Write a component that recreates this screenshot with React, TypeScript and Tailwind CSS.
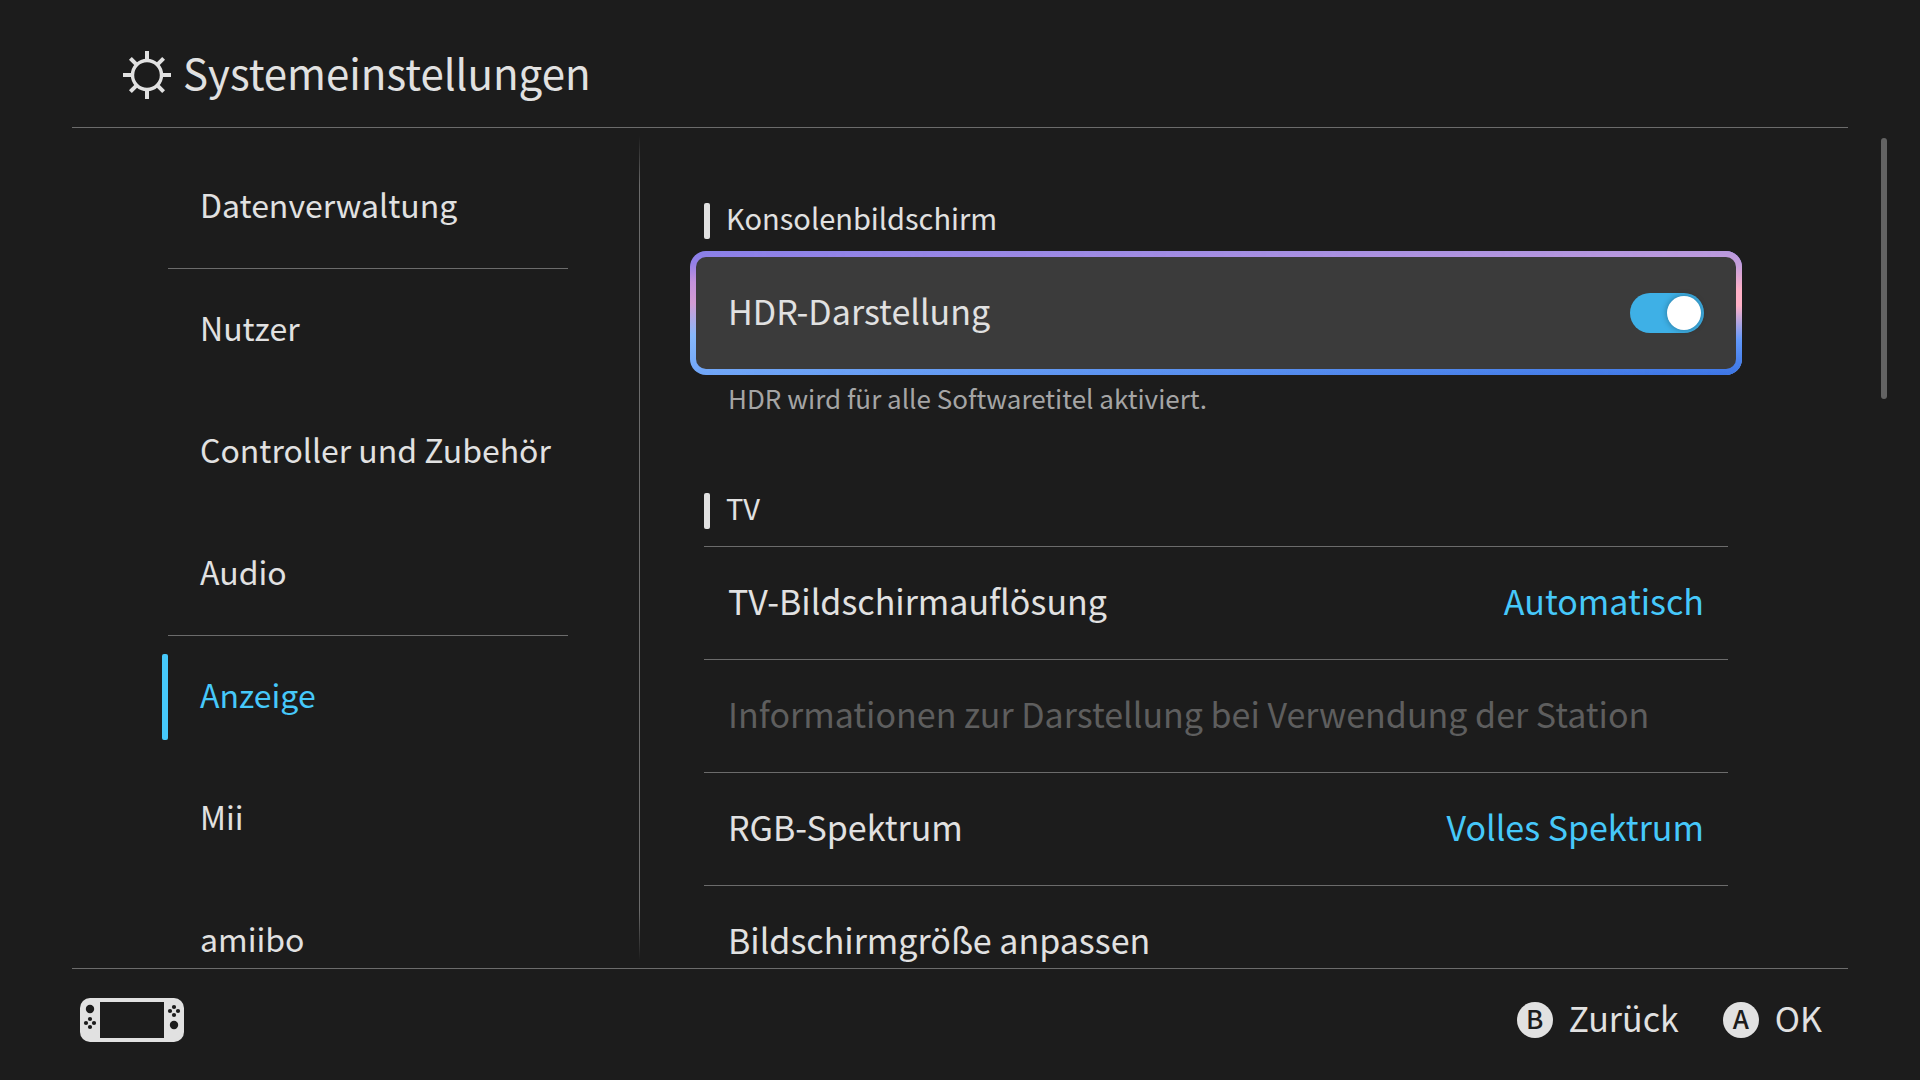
import { useState } from "react";

type NavItem = { label: string; active?: boolean; lineAfter?: boolean };

const navItems: NavItem[] = [
  { label: "Datenverwaltung", lineAfter: true },
  { label: "Nutzer" },
  { label: "Controller und Zubehör" },
  { label: "Audio", lineAfter: true },
  { label: "Anzeige", active: true },
  { label: "Mii" },
  { label: "amiibo" },
];

type Row = { label: string; value?: string; disabled?: boolean };

const tvRows: Row[] = [
  { label: "TV-Bildschirmauflösung", value: "Automatisch" },
  { label: "Informationen zur Darstellung bei Verwendung der Station", disabled: true },
  { label: "RGB-Spektrum", value: "Volles Spektrum" },
  { label: "Bildschirmgröße anpassen" },
];

const rayAngles = [0, 45, 90, 135, 180, 225, 270, 315];

function SettingsIcon() {
  return (
    <svg viewBox="-24 -24 48 48" className="size-12 shrink-0" fill="none" stroke="currentColor" aria-hidden="true">
      <circle r="14.5" strokeWidth="3.4" />
      {rayAngles.map((angle) => (
        <path
          key={angle}
          d={angle % 90 === 0 ? "M0 -15V-24" : "M0 -15V-23.5"}
          strokeWidth="4"
          transform={`rotate(${angle})`}
        />
      ))}
    </svg>
  );
}

function ConsoleIcon() {
  return (
    <svg viewBox="0 0 104 44" className="h-11 w-[104px] shrink-0" aria-label="Konsole" role="img">
      <rect width="104" height="44" rx="10" fill="#e1e1e1" />
      <g fill="#1c1c1c">
        <rect x="20" y="4" width="64" height="36" />
        <circle cx="10" cy="11" r="4.2" />
        <circle cx="10" cy="21" r="2.1" />
        <circle cx="6" cy="25" r="2.1" />
        <circle cx="14" cy="25" r="2.1" />
        <circle cx="10" cy="29" r="2.1" />
        <circle cx="94" cy="9" r="2.1" />
        <circle cx="90" cy="13" r="2.1" />
        <circle cx="98" cy="13" r="2.1" />
        <circle cx="94" cy="17" r="2.1" />
        <circle cx="94" cy="27" r="4.2" />
      </g>
    </svg>
  );
}

function SectionTitle({ children }: { children: string }) {
  return (
    <h2 className="flex h-9 items-center gap-4 text-[29px] leading-none">
      <span className="h-full w-1.5 rounded-xs bg-[#e1e1e1]" />
      <span className="pb-2">{children}</span>
    </h2>
  );
}

function HintButton({ glyph, label }: { glyph: string; label: string }) {
  return (
    <button type="button" className="flex items-center gap-4 text-[34px]">
      <span className="grid size-9 place-items-center rounded-full bg-[#e1e1e1] pb-1 text-[26px] leading-none font-medium text-[#1c1c1c]">
        {glyph}
      </span>
      <span className="pb-1 leading-10">{label}</span>
    </button>
  );
}

export default function App() {
  const [hdr, setHdr] = useState(true);

  return (
    <div className="flex h-screen flex-col overflow-hidden bg-[#1c1c1c] font-['Noto_Sans_CJK_JP',sans-serif] text-[#e1e1e1]">
      <header className="mx-[72px] flex h-32 shrink-0 items-center gap-3 border-b border-[#6b6b6b] pt-[22px] pl-[51px]">
        <SettingsIcon />
        <h1 className="pb-1.5 text-[42px] leading-none">Systemeinstellungen</h1>
      </header>

      <main className="flex min-h-0 flex-1">
        <nav className="w-[568px] shrink-0 overflow-hidden pt-[18px] pl-[162px]">
          <ul>
            {navItems.map((item) => (
              <li key={item.label}>
                <button
                  type="button"
                  aria-current={item.active ? "page" : undefined}
                  className={
                    item.active
                      ? "flex h-[122px] w-full items-center gap-8 text-left text-[32px] text-[#46c8fa]"
                      : "flex h-[122px] w-full items-center gap-8 text-left text-[32px]"
                  }
                >
                  <span
                    className={
                      item.active ? "h-[86px] w-1.5 rounded-xs bg-[#46c8fa]" : "h-[86px] w-1.5"
                    }
                  />
                  <span className="pb-1.5 leading-10">{item.label}</span>
                </button>
                {item.lineAfter && <hr className="ml-1.5 border-[#6b6b6b]" />}
              </li>
            ))}
          </ul>
        </nav>

        <div className="my-2 ml-[71px] w-px shrink-0 bg-[linear-gradient(to_bottom,transparent,#6b6b6b_6%,#6b6b6b_94%,transparent)]" />

        <div className="min-w-0 flex-1 overflow-hidden pt-[75px] pr-[139px] pl-[50px]">
          <section>
            <div className="px-3.5">
              <SectionTitle>Konsolenbildschirm</SectionTitle>
            </div>
            <label className="relative mt-3 block cursor-pointer overflow-hidden rounded-2xl bg-[linear-gradient(to_bottom,#8880ea,#9580e6_10%,#c492dc_25%,#d29cd2_42%,#88b8fa_68%,#70a6f8)] p-1.5">
              <span className="absolute inset-0 bg-[linear-gradient(to_bottom,#b898dc,#c8a0dc_12%,#ffb0c6_32%,#ffb0c6_44%,#6098fa_72%,#3c74e4)] [mask-image:linear-gradient(to_right,transparent,black)]" />
              <span className="relative flex h-28 items-center justify-between rounded-[10px] bg-[#3b3b3b] px-8">
                <span className="pb-1 text-[34px] leading-10">HDR-Darstellung</span>
                <input
                  type="checkbox"
                  role="switch"
                  checked={hdr}
                  onChange={(e) => setHdr(e.target.checked)}
                  className="peer sr-only"
                />
                <span className="flex h-10 w-[74px] items-center rounded-full bg-[#707070] p-[3px] peer-checked:justify-end peer-checked:bg-[#3eb0e6]">
                  <span className="size-[34px] rounded-full bg-white shadow-[0_0_6px_rgba(0,0,0,0.35)]" />
                </span>
              </span>
            </label>
            <p className="mt-[3px] pl-[38px] text-[26px] leading-10 text-[#a5a5a5]">
              HDR wird für alle Softwaretitel aktiviert.
            </p>
          </section>

          <section className="mt-[75px] px-3.5">
            <SectionTitle>TV</SectionTitle>
            <ul className="mt-[17px]">
              {tvRows.map((row) => (
                <li key={row.label} className="border-t border-[#6b6b6b]">
                  <button
                    type="button"
                    disabled={row.disabled}
                    className="flex h-28 w-full items-center justify-between px-6 pb-1.5 text-left text-[34px] whitespace-nowrap disabled:text-[#5e5e5e]"
                  >
                    <span>{row.label}</span>
                    {row.value && <span className="text-[#46c8fa]">{row.value}</span>}
                  </button>
                </li>
              ))}
            </ul>
          </section>
        </div>

        <div className="mt-[10px] mr-[33px] w-1.5 shrink-0">
          <div className="h-[261px] rounded-full bg-[#636363]" />
        </div>
      </main>

      <footer className="mx-[72px] flex h-28 shrink-0 items-center justify-between border-t border-[#6b6b6b] pr-[26px] pb-2.5 pl-2">
        <ConsoleIcon />
        <div className="flex gap-11">
          <HintButton glyph="B" label="Zurück" />
          <HintButton glyph="A" label="OK" />
        </div>
      </footer>
    </div>
  );
}
